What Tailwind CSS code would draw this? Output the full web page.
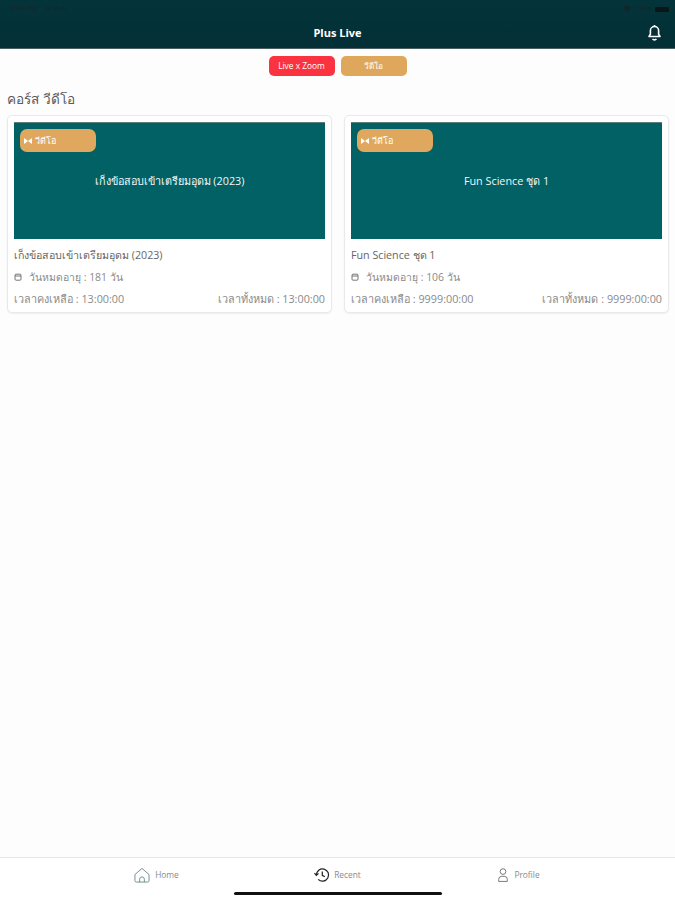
<!DOCTYPE html>
<html lang="en">
<head>
    <meta charset="UTF-8">
    <meta name="viewport" content="width=device-width, initial-scale=1.0">
    <title>Plus Live</title>
    <script src="https://cdn.jsdelivr.net/npm/@tailwindcss/browser@4"></script>
</head>
<body class="bg-[#fdfdfd] font-['Open_Sans','Noto_Sans','DejaVu_Sans',sans-serif]">
<div class="relative flex h-[900px] w-[675px] flex-col overflow-hidden">
    <!-- Header -->
    <header class="h-[49px] shrink-0 border-b border-[#4a5f63] bg-gradient-to-b from-[#04343b] to-[#032f36] text-white">
        <div class="flex h-[17px] items-center justify-between pl-[11px] pr-[6px] pt-[1px] text-[7px] text-[#16262a]">
            <span>9:08 PM &nbsp;&nbsp; 30 ต.ค.</span>
            <div class="flex items-center gap-[3px]">
                <svg class="h-2 w-2" viewBox="0 0 10 10" fill="#14262a"><path d="M0 3 Q5 -1 10 3 L5 9Z"/></svg>
                <span>100%</span>
                <span class="h-[5px] w-[14px] rounded-[1px] bg-[#0c1517]"></span>
            </div>
        </div>
        <div class="relative flex h-[31px] items-center justify-center">
            <span class="pt-[1px] text-[11px] font-bold">Plus Live</span>
            <svg class="absolute right-[13px] top-[7px] h-[17px] w-[15px]" viewBox="0 0 15 17" fill="none" stroke="white" stroke-width="1.6">
                <path d="M2 12.5h11l-1.4-2.2V6.6a4.1 4.1 0 0 0-8.2 0v3.700Z" stroke-linejoin="round"/>
                <path d="M5.600 14.800a2.200 2.200 0 0 0 3.800 0"/>
                <path d="M7.500 1v1.400"/>
            </svg>
        </div>
    </header>

    <!-- Tabs -->
    <div class="mt-[7px] flex justify-center gap-[6px]">
        <button class="flex h-[20px] w-[66px] items-center justify-center rounded-[5px] bg-[#fb323f] text-[8.400px] text-white">Live x Zoom</button>
        <button class="flex h-[20px] w-[66px] items-center justify-center rounded-[5px] bg-[#dfa75c] text-[8.400px] text-white">วีดีโอ</button>
    </div>

    <h2 class="ml-[7px] mt-[12px] text-[13.600px] leading-[22px] text-[#5b5b5b]">คอร์ส วีดีโอ</h2>

    <!-- Courses -->
    <div class="mt-[5px] grid grid-cols-2 gap-[12px] pl-[7px] pr-[6px]">
        <div class="h-[198px] rounded-[5px] border border-[#e9e9e9] bg-white px-[6px] pt-[6px] shadow-[0_1px_2px_rgba(0,0,0,0.06)]">
            <div class="relative flex h-[117px] items-center justify-center border-t border-[#5d7c7e] bg-[#016164] pt-[1px] text-[10.800px] font-medium text-[#f2f7f7]">
                <div class="absolute left-[6px] top-[6px] flex h-[23px] w-[76px] items-center gap-[3px] rounded-[7px] bg-[#e0a85e] pl-[4px] text-[9px] font-normal text-white">
                    <svg class="h-[6px] w-[8px]" viewBox="0 0 8 6" fill="white"><path d="M0 0l4 3-4 3zM8 0L4 3l4 3z"/></svg>
                    <span>วีดีโอ</span>
                </div>
                <span>เก็งข้อสอบเข้าเตรียมอุดม (2023)</span>
            </div>
            <p class="mt-[9px] text-[10.700px] leading-[14px] text-[#666666]">เก็งข้อสอบเข้าเตรียมอุดม (2023)</p>
            <div class="mt-[8px] flex items-center gap-[7px] text-[10.400px] leading-[14px] text-[#8a8a8a]">
                <svg class="h-[8px] w-[8px]" viewBox="0 0 8 8" fill="none" stroke="#666" stroke-width="0.9"><rect x="1" y="1.200" width="6" height="6" rx="1"/><path d="M1 3h6"/></svg>
                <span>วันหมดอายุ : 181 วัน</span>
            </div>
            <div class="mt-[8px] flex justify-between text-[10.800px] leading-[14px] text-[#8a8a8a]">
                <span>เวลาคงเหลือ : 13:00:00</span>
                <span>เวลาทั้งหมด : 13:00:00</span>
            </div>
        </div>
        <div class="h-[198px] rounded-[5px] border border-[#e9e9e9] bg-white px-[6px] pt-[6px] shadow-[0_1px_2px_rgba(0,0,0,0.06)]">
            <div class="relative flex h-[117px] items-center justify-center border-t border-[#5d7c7e] bg-[#016164] pt-[1px] text-[10.800px] font-medium text-[#f2f7f7]">
                <div class="absolute left-[6px] top-[6px] flex h-[23px] w-[76px] items-center gap-[3px] rounded-[7px] bg-[#e0a85e] pl-[4px] text-[9px] font-normal text-white">
                    <svg class="h-[6px] w-[8px]" viewBox="0 0 8 6" fill="white"><path d="M0 0l4 3-4 3zM8 0L4 3l4 3z"/></svg>
                    <span>วีดีโอ</span>
                </div>
                <span>Fun Science ชุด 1</span>
            </div>
            <p class="mt-[9px] text-[10.700px] leading-[14px] text-[#666666]">Fun Science ชุด 1</p>
            <div class="mt-[8px] flex items-center gap-[7px] text-[10.400px] leading-[14px] text-[#8a8a8a]">
                <svg class="h-[8px] w-[8px]" viewBox="0 0 8 8" fill="none" stroke="#666" stroke-width="0.9"><rect x="1" y="1.200" width="6" height="6" rx="1"/><path d="M1 3h6"/></svg>
                <span>วันหมดอายุ : 106 วัน</span>
            </div>
            <div class="mt-[8px] flex justify-between text-[10.800px] leading-[14px] text-[#8a8a8a]">
                <span>เวลาคงเหลือ : 9999:00:00</span>
                <span>เวลาทั้งหมด : 9999:00:00</span>
            </div>
        </div>
    </div>

    <!-- Bottom nav -->
    <nav class="mt-auto h-[43px] shrink-0 border-t border-[#e6e6e6] bg-white">
        <div class="grid h-[33px] grid-cols-3 px-[66px] text-[8.400px] text-[#8a8a8a]">
            <div class="flex items-center justify-center gap-[5px]">
                <svg class="h-[16px] w-[16px]" viewBox="0 0 17 17" fill="none" stroke="#6d8a8c" stroke-width="1"><path d="M1 8 8.500 1.500 16 8v6.500a1.500 1.500 0 0 1-1.500 1.500h-12A1.500 1.500 0 0 1 1 14.500Z" stroke-linejoin="round"/><path d="M6 16v-3a2.500 2.500 0 0 1 5 0v3"/></svg>
                <span class="pt-[2px]">Home</span>
            </div>
            <div class="flex items-center justify-center gap-[4px]">
                <svg class="h-[16px] w-[16px]" viewBox="0 0 17 17" fill="none" stroke="#222" stroke-width="1.300"><path d="M2.500 8.500a6.500 6.500 0 1 1 2 4.700"/><path d="M0.500 6.500l2 2.300 2.300-2"/><path d="M8.800 4.800v4l2.700 1.600"/></svg>
                <span class="pt-[2px]">Recent</span>
            </div>
            <div class="flex items-center justify-center gap-[5px]">
                <svg class="h-[16px] w-[12px]" viewBox="0 0 14 17" fill="none" stroke="#666" stroke-width="1"><circle cx="7" cy="4.500" r="3.300"/><path d="M2 16v-2.500a3.500 3.500 0 0 1 3.500-3.500h3a3.500 3.500 0 0 1 3.500 3.500V16Z"/></svg>
                <span class="pt-[2px]">Profile</span>
            </div>
        </div>
        <div class="mx-auto mt-[1px] h-[3px] w-[208px] rounded-full bg-[#111]"></div>
    </nav>
</div>
</body>
</html>
